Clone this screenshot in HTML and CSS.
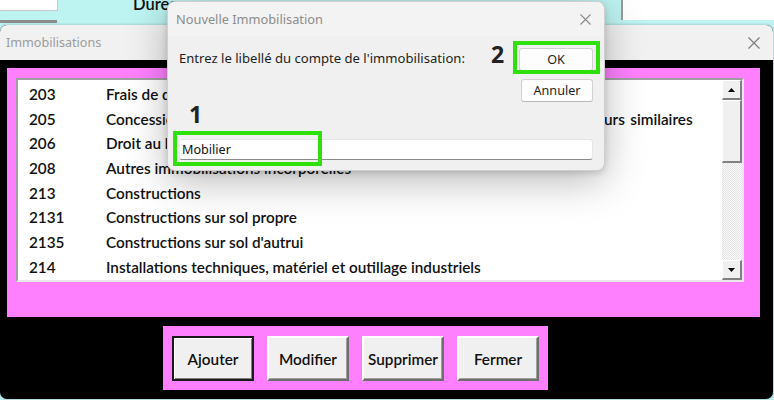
FILE: index.html
```html
<!DOCTYPE html>
<html lang="fr">
<head>
<meta charset="utf-8">
<title>Immobilisations</title>
<link rel="stylesheet" href="styles.css">
</head>
<body>
<div class="desk">
  <div class="bg-top">
    <div class="cell-a"></div>
    <div class="cell-dur">Durée</div>
    <div class="cell-b"></div>
  </div>
  <div class="bg-line"></div>

  <div class="win">
    <div class="titlebar">
      <span class="title">Immobilisations</span>
      <svg class="xclose" width="12" height="12" viewBox="0 0 12 12"><path d="M0.5 0.5 L11.5 11.5 M11.5 0.5 L0.5 11.5" stroke="#7a7a7a" stroke-width="1.1" fill="none"/></svg>
    </div>
    <div class="client">
      <div class="panel">
        <div class="listbox">
          <div class="rows">
            <div class="row"><span class="code">203</span><span class="lbl">Frais de développement</span></div>
            <div class="row"><span class="code">205</span><span class="lbl lbl-long">Concessions et droits similaires, brevets, licences, logiciels, droits et valeurs similaires</span></div>
            <div class="row"><span class="code">206</span><span class="lbl">Droit au bail</span></div>
            <div class="row"><span class="code">208</span><span class="lbl">Autres immobilisations incorporelles</span></div>
            <div class="row"><span class="code">213</span><span class="lbl">Constructions</span></div>
            <div class="row"><span class="code">2131</span><span class="lbl">Constructions sur sol propre</span></div>
            <div class="row"><span class="code">2135</span><span class="lbl">Constructions sur sol d'autrui</span></div>
            <div class="row"><span class="code">214</span><span class="lbl">Installations techniques, matériel et outillage industriels</span></div>
          </div>
          <div class="vscroll">
            <div class="sb-btn"><svg width="7" height="4" viewBox="0 0 7 4"><path d="M3.5 0 L7 4 L0 4 Z" fill="#000"/></svg></div>
            <div class="sb-thumb"></div>
            <div class="sb-track"></div>
            <div class="sb-btn"><svg width="7" height="4" viewBox="0 0 7 4"><path d="M0 0 L7 0 L3.5 4 Z" fill="#000"/></svg></div>
          </div>
        </div>
      </div>
      <div class="btnbar">
        <button class="cmd default">Ajouter</button>
        <button class="cmd">Modifier</button>
        <button class="cmd">Supprimer</button>
        <button class="cmd">Fermer</button>
      </div>
    </div>
  </div>

  <div class="dialog">
    <div class="dlg-title">
      <span class="dlg-caption">Nouvelle Immobilisation</span>
      <svg class="dlg-x" width="11" height="11" viewBox="0 0 11 11"><path d="M0.5 0.5 L10.5 10.5 M10.5 0.5 L0.5 10.5" stroke="#8a8a8a" stroke-width="1.1" fill="none"/></svg>
    </div>
    <div class="dlg-body">
      <div class="dlg-top">
        <div class="prompt">Entrez le libellé du compte de l'immobilisation:</div>
        <div class="dlg-btns">
          <button class="dbtn">OK</button>
          <button class="dbtn">Annuler</button>
        </div>
      </div>
      <div class="dlg-input">Mobilier</div>
    </div>
  </div>

  <div class="hl hl-ok"></div>
  <div class="hl hl-input"></div>
  <div class="num num-1">1</div>
  <div class="num num-2">2</div>
</div>
</body>
</html>
```

FILE: styles.css
```css
* { box-sizing: border-box; }
html, body { margin: 0; padding: 0; }
body {
  width: 774px;
  height: 400px;
  overflow: hidden;
  background: #bdf3f1;
  font-family: "Lato", "Liberation Sans", sans-serif;
}
.desk {
  position: relative;
  width: 774px;
  height: 400px;
  overflow: hidden;
}
.bg-top {
  display: flex;
  height: 20px;
}
.cell-a {
  width: 58px;
  height: 11px;
  background: #fff;
  border-right: 1px solid #c8c8c8;
  border-bottom: 1px solid #c8c8c8;
}
.cell-dur {
  margin-left: 75px;
  margin-top: -6px;
  height: 20px;
  font-size: 16.5px;
  font-weight: 600;
  color: #111;
  white-space: nowrap;
}
.cell-b {
  margin-left: auto;
  width: 153px;
  height: 20px;
  background: #fff;
  border-left: 2px solid #9a9a9a;
}
.bg-line {
  width: 57px;
  height: 3px;
  background: #8c8c8c;
}

/* Main window */
.win {
  position: absolute;
  left: 0;
  top: 25px;
  width: 773px;
  height: 374px;
  border-radius: 7px;
  overflow: hidden;
  background: #000;
  box-shadow: 0 0 3px rgba(0,0,0,0.25);
}
.titlebar {
  height: 35px;
  background: #f1f1f1;
  display: flex;
  align-items: center;
  padding: 0 13px 0 6px;
}
.title {
  font-family: "Noto Sans", "Open Sans", sans-serif;
  font-size: 12.6px;
  color: #9b9b9b;
}
.xclose { margin-left: auto; }
.client {
  padding: 8px 0 0 7px;
}
.panel {
  width: 753px;
  height: 249px;
  background: #ff80ff;
  padding: 10px 16px 35px 9px;
}
.listbox {
  height: 204px;
  background: #fff;
  border-top: 2px solid #a0a0a0;
  border-left: 2px solid #a0a0a0;
  border-right: 2px solid #e8e8e8;
  border-bottom: 2px solid #e8e8e8;
  display: flex;
  overflow: hidden;
}
.rows {
  flex: 1;
  padding-top: 2px;
  overflow: hidden;
}
.row {
  display: flex;
  height: 24.7px;
  line-height: 24.7px;
  font-size: 15.3px;
  font-weight: 600;
  color: #111;
  white-space: nowrap;
}
.code {
  width: 88px;
  padding-left: 11px;
  flex: none;
}
.lbl { flex: none; }
.lbl-long { word-spacing: 1.6px; }
.vscroll {
  width: 20px;
  display: flex;
  flex-direction: column;
  flex: none;
}
.sb-btn {
  height: 20px;
  background: #f0f0f0;
  border-top: 1px solid #fff;
  border-left: 1px solid #fff;
  border-right: 2px solid #808080;
  border-bottom: 2px solid #808080;
  display: flex;
  align-items: center;
  justify-content: center;
  flex: none;
}
.sb-thumb {
  height: 63px;
  background: #f0f0f0;
  border-top: 1px solid #fff;
  border-left: 1px solid #fff;
  border-right: 2px solid #808080;
  border-bottom: 2px solid #808080;
  flex: none;
}
.sb-track {
  flex: 1;
  background: repeating-conic-gradient(#e4e4e4 0 25%, #fafafa 0 50%) 0 0 / 2px 2px;
}

.btnbar {
  margin: 9px 0 0 156px;
  width: 385px;
  height: 64px;
  background: #ff80ff;
  padding: 10px 9px 9px 9px;
  display: flex;
  gap: 13px;
}
.cmd {
  width: 82px;
  height: 45px;
  margin: 0;
  padding: 0;
  background: #f0f0f0;
  font-family: "Lato", "Liberation Sans", sans-serif;
  font-size: 15.3px;
  font-weight: 600;
  color: #111;
  border-top: 2px solid #fff;
  border-left: 2px solid #fff;
  border-right: 2px solid #6e6e6e;
  border-bottom: 2px solid #6e6e6e;
  box-shadow: inset -1px -1px 0 #a0a0a0;
}
.cmd.default {
  border: 2px solid #1a1a1a;
  box-shadow: inset 1px 1px 0 #fff, inset -1px -1px 0 #808080;
}

/* Dialog */
.dialog {
  position: absolute;
  left: 167px;
  top: 1px;
  width: 438px;
  height: 170px;
  border-radius: 8px;
  border: 1px solid #cfcfcf;
  background: #f0f0f0;
  overflow: hidden;
  box-shadow: 0 10px 40px rgba(0,0,0,0.28), 0 2px 6px rgba(0,0,0,0.15);
  font-family: "Noto Sans", "Open Sans", sans-serif;
}
.dlg-title {
  height: 34px;
  background: #f3f3f3;
  display: flex;
  align-items: center;
  padding: 0 13px 0 8px;
}
.dlg-caption {
  font-size: 12.8px;
  color: #8c8c8c;
}
.dlg-x { margin-left: auto; }
.dlg-body {
  padding: 12px 11px 0 11px;
}
.dlg-top {
  display: flex;
  justify-content: space-between;
}
.prompt {
  font-size: 13.1px;
  line-height: 18px;
  color: #1e1e1e;
  padding-top: 1px;
}
.dlg-btns {
  display: flex;
  flex-direction: column;
  gap: 8px;
  align-items: flex-end;
}
.dbtn {
  width: 74px;
  height: 23px;
  margin: 0;
  padding: 0;
  background: #fdfdfd;
  border: 1px solid #d0d0d0;
  border-bottom-color: #b8b8b8;
  border-radius: 3px;
  font-family: "Noto Sans", "Open Sans", sans-serif;
  font-size: 12.6px;
  color: #1e1e1e;
}
.dbtn + .dbtn { width: 72px; }
.dlg-input {
  margin-top: 37px;
  height: 21px;
  background: #fff;
  border: 1px solid #e6e6e6;
  border-bottom: 1px solid #8a8a8a;
  border-radius: 3px;
  font-size: 12.6px;
  line-height: 19px;
  padding-left: 2px;
  color: #111;
}

/* annotations */
.hl {
  position: absolute;
  border: 4px solid #2fe00a;
}
.hl-ok { left: 513px; top: 41px; width: 87px; height: 33px; }
.hl-input { left: 173px; top: 131px; width: 149px; height: 35px; }
.num {
  position: absolute;
  font-family: "Open Sans", "DejaVu Sans", sans-serif;
  font-weight: 700;
  font-size: 23px;
  line-height: 23px;
  color: #222;
}
.num-1 { left: 189px; top: 103px; }
.num-2 { left: 491px; top: 43px; }
```
